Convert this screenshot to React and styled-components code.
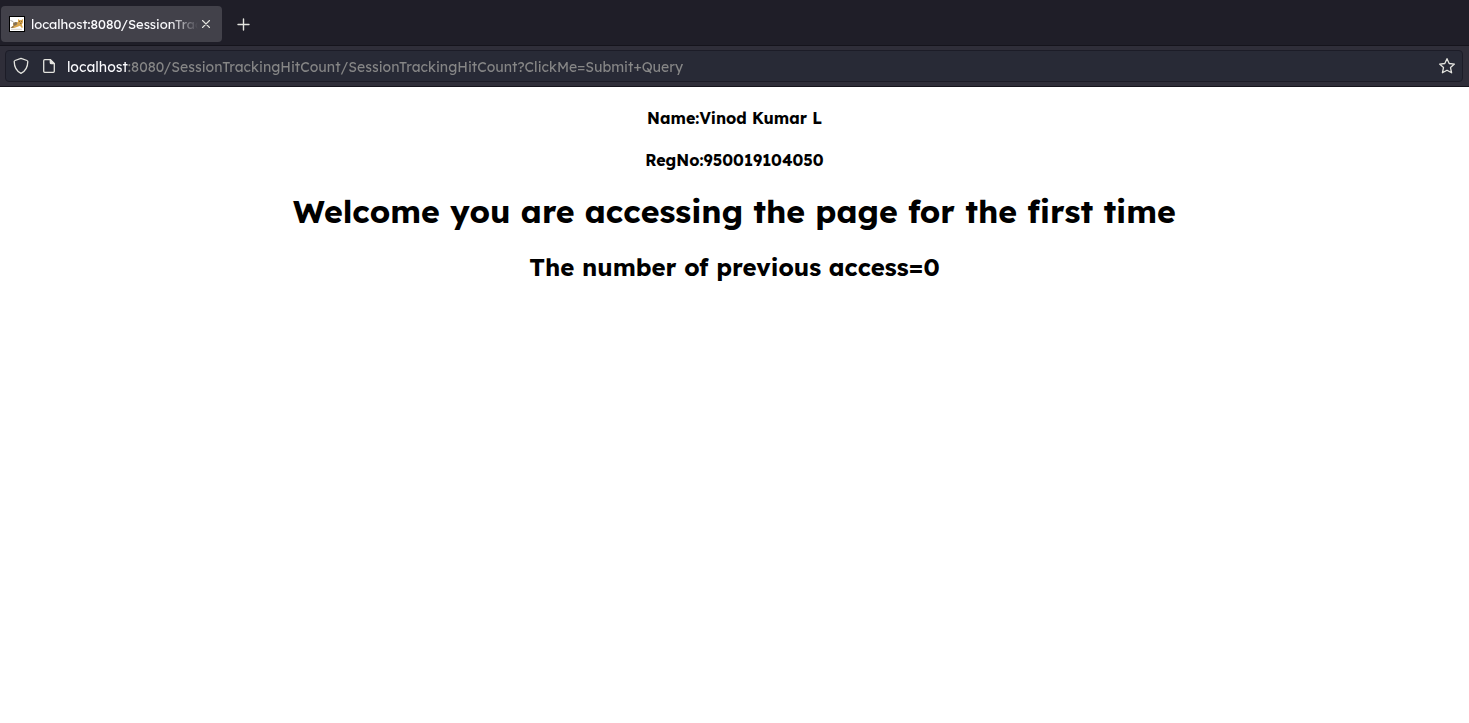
import React from "react";
import styled, { createGlobalStyle } from "styled-components";

const GlobalStyle = createGlobalStyle`
  *, *::before, *::after { box-sizing: border-box; }
  body {
    margin: 0;
    background: #fff;
    color: #000;
    font-family: Lexend, Inter, "Liberation Sans", sans-serif;
  }
`;

const TabStrip = styled.header`
  display: flex;
  align-items: center;
  height: 46px;
  padding: 3px 1px 0;
  background: #1f1e28;
  border-bottom: 1px solid #15141c;
`;

const Tab = styled.div`
  display: flex;
  align-items: center;
  width: 221px;
  height: 36px;
  padding: 0 8px;
  border-radius: 4px;
  background: #42414a;
  color: #fbfbfe;
`;

const TabTitle = styled.span`
  flex: 1;
  min-width: 0;
  margin-left: 6px;
  overflow: hidden;
  white-space: nowrap;
  font-size: 13px;
  line-height: 20px;
  mask-image: linear-gradient(to left, transparent, #000 28px);
`;

const IconButton = styled.button`
  display: flex;
  align-items: center;
  justify-content: center;
  flex: none;
  width: ${(p) => p.$size}px;
  height: ${(p) => p.$size}px;
  padding: 0;
  border: 0;
  border-radius: 4px;
  background: none;
  color: #e4e4df;
`;

const NewTab = styled(IconButton)`
  margin-left: 9px;
`;

const Toolbar = styled.div`
  height: 41px;
  padding: 4px 6px 4px 5px;
  background: #2f2e39;
  border-bottom: 1px solid #15141c;
`;

const AddressBar = styled.form`
  display: flex;
  align-items: center;
  height: 32px;
  padding: 0 1px;
  border: 1px solid #1c1c27;
  border-radius: 4px;
  background: #282a36;
`;

const Address = styled.input`
  flex: 1;
  min-width: 0;
  height: 26px;
  margin-left: 4px;
  padding: 2px 0 0;
  border: 0;
  outline: 0;
  font-family: inherit;
  font-size: 14px;
  color: transparent;
  background: linear-gradient(to right, #fbfbfe 61px, #868686 61px);
  background-clip: text;
  -webkit-background-clip: text;
`;

const Content = styled.main`
  padding: 21px 8px;
  text-align: center;
`;

const Detail = styled.h4`
  margin: 0 0 22px;
  font-size: 16px;
  line-height: 20px;
  font-weight: 700;
`;

const Welcome = styled.h1`
  margin: 0 0 22px;
  font-size: 32px;
  line-height: 38px;
  font-weight: 700;
`;

const Count = styled.h2`
  margin: 0;
  font-size: 24px;
  line-height: 30px;
  font-weight: 700;
`;

const line = {
  fill: "none",
  stroke: "currentColor",
  strokeLinecap: "round",
  strokeLinejoin: "round",
  "aria-hidden": true,
};

const Favicon = () => (
  <svg width="16" height="16" viewBox="0 0 16 16" aria-hidden="true">
    <rect width="16" height="16" fill="#000" />
    <rect x="1" y="1" width="14" height="14" fill="#fff" />
    <path d="M1.500 4.500L4 5.500l1.500 2" stroke="#a9a7a2" fill="none" />
    <path d="M4 7.500L6.500 6 9 6.200V3l1.500 1h2L14 3v3.500L12.800 8.500 14 11.500l-1.500.3-1.500-2-3 1.200-3 1H1.500L4 10z" fill="#dba74d" />
    <path d="M4 7.500L6.500 6l2 .8L7.500 9 5 10zM1.500 11.500L4 10l1.200.5-1.500 1.500z" fill="#85735a" />
    <path d="M10 5.500h1M12.200 5.500h.8M11 7.300h1.500" stroke="#5d472b" strokeWidth=".7" />
    <path d="M2 13.300h11" stroke="#c9c2b4" strokeWidth=".8" />
  </svg>
);

const CloseIcon = () => (
  <svg width="10" height="10" viewBox="0 0 10 10" strokeWidth="1.1" {...line}>
    <path d="M1.500 1.500l7 7M8.500 1.500l-7 7" />
  </svg>
);

const PlusIcon = () => (
  <svg width="13" height="13" viewBox="0 0 13 13" strokeWidth="1.4" {...line}>
    <path d="M6.500 1v11M1 6.500h11" />
  </svg>
);

const ShieldIcon = () => (
  <svg width="16" height="18" viewBox="0 0 16 18" strokeWidth="1.3" {...line}>
    <path d="M8 1.300L14 3.500c.6.200.8.600.8 1.100C14.700 10.200 12.500 14.300 8 16.400 3.500 14.300 1.300 10.200 1.200 4.600c0-.5.200-.9.800-1.100z" />
  </svg>
);

const PageIcon = () => (
  <svg width="14" height="16" viewBox="0 0 14 16" strokeWidth="1.3" {...line}>
    <path d="M2.700 1.700h5.600L12.300 5.700v7.600c0 .6-.4 1-1 1H2.700c-.6 0-1-.4-1-1V2.700c0-.6.4-1 1-1z" />
    <path d="M8.300 1.700v3c0 .6.4 1 1 1h3z" fill="currentColor" />
  </svg>
);

const StarIcon = () => (
  <svg width="18" height="18" viewBox="0 0 18 18" strokeWidth="1.3" {...line}>
    <path d="M9 1.700l2.200 4.800 5.200.6-3.900 3.500 1.100 5.200L9 13.200l-4.600 2.600 1.100-5.200L1.600 7.100l5.200-.6z" />
  </svg>
);

export default function App() {
  return (
    <>
      <GlobalStyle />
      <TabStrip>
        <Tab>
          <Favicon />
          <TabTitle>localhost:8080/SessionTrac</TabTitle>
          <IconButton $size={16} type="button" aria-label="Close tab">
            <CloseIcon />
          </IconButton>
        </Tab>
        <NewTab $size={24} type="button" aria-label="Open a new tab">
          <PlusIcon />
        </NewTab>
      </TabStrip>
      <Toolbar>
        <AddressBar onSubmit={(e) => e.preventDefault()}>
          <IconButton $size={28} type="button" aria-label="Tracking protection">
            <ShieldIcon />
          </IconButton>
          <IconButton $size={28} type="button" aria-label="Site information">
            <PageIcon />
          </IconButton>
          <Address
            type="text"
            aria-label="Address"
            spellCheck={false}
            defaultValue="localhost:8080/SessionTrackingHitCount/SessionTrackingHitCount?ClickMe=Submit+Query"
          />
          <IconButton $size={28} type="button" aria-label="Bookmark this page">
            <StarIcon />
          </IconButton>
        </AddressBar>
      </Toolbar>
      <Content>
        <Detail>Name:Vinod Kumar L</Detail>
        <Detail>RegNo:950019104050</Detail>
        <Welcome>Welcome you are accessing the page for the first time</Welcome>
        <Count>The number of previous access=0</Count>
      </Content>
    </>
  );
}
